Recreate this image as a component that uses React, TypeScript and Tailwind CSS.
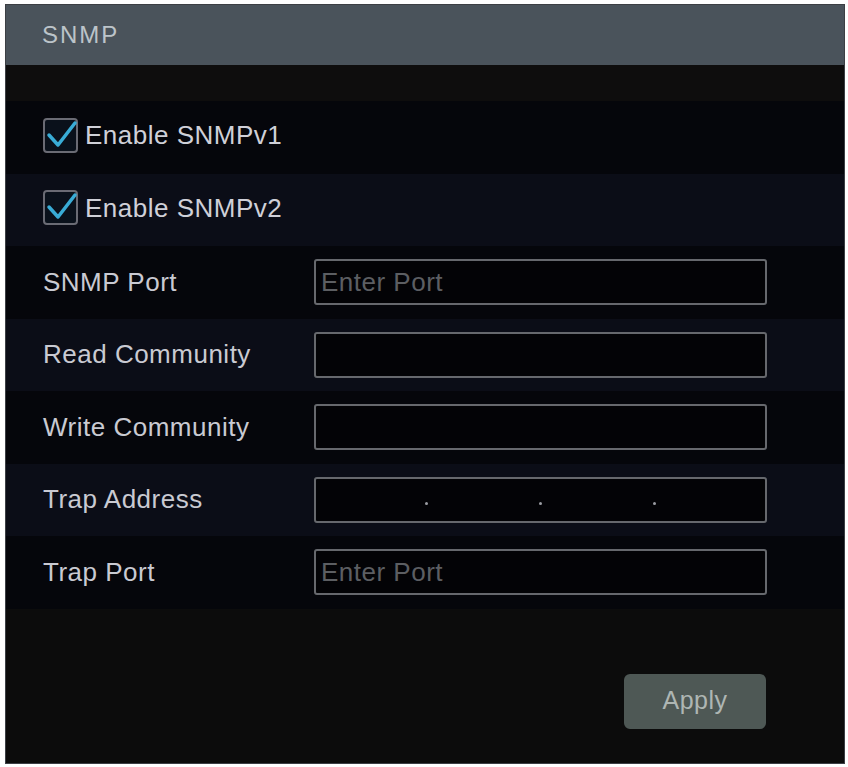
const font = { fontFamily: '"Liberation Sans", Arial, sans-serif' };

const Check = () => (
  <svg width="36" height="36" viewBox="0 0 36 36" className="shrink-0">
    <rect x="1" y="1" width="33" height="33" rx="3" fill="#0a111b" stroke="#6a6b74" strokeWidth="2" />
    <path d="M6 17 L15 27 L32 5" fill="none" stroke="#39acd6" strokeWidth="3.5" strokeLinecap="round" strokeLinejoin="round" />
  </svg>
);

const rows = [
  { kind: "check", label: "Enable SNMPv1" },
  { kind: "check", label: "Enable SNMPv2" },
  { kind: "input", label: "SNMP Port", placeholder: "Enter Port" },
  { kind: "input", label: "Read Community" },
  { kind: "input", label: "Write Community" },
  { kind: "ip", label: "Trap Address" },
  { kind: "input", label: "Trap Port", placeholder: "Enter Port" },
];

const Dot = () => <span className="w-[3px] h-[3px] rounded-full bg-[#9a9ca2]" />;

export default function App() {
  return (
    <div className="w-[848px] h-[767px] bg-white pt-[4px] pl-[5px]" style={font}>
      <div className="w-[840px] h-[760px] flex flex-col border border-[#3c3f44] bg-[#0c0c0c]">
        <div className="h-[60px] shrink-0 bg-[#4a535b] flex items-center pl-[36px] text-[24px] tracking-[2px] text-[#bcc4c9]">
          SNMP
        </div>
        <div className="h-[36px] shrink-0 bg-[#0e0d0d]" />
        {rows.map((row, i) => (
          <div
            key={row.label}
            className={
              "h-[72.5px] shrink-0 flex items-center pl-[37px] " +
              (i % 2 === 0 ? "bg-[#05060b]" : "bg-[#0b0d17]")
            }
          >
            {row.kind === "check" ? (
              <div className="flex items-center gap-[6px] -mt-[3px]">
                <Check />
                <span className="text-[26px] tracking-[0.5px] text-[#cfd0d8]">{row.label}</span>
              </div>
            ) : (
              <>
                <span className="w-[271px] text-[26px] tracking-[0.5px] text-[#c9cad2]">{row.label}</span>
                <div className="w-[453px] h-[46px] rounded-[3px] border-2 border-[#66686d] bg-[#030306] flex items-center px-[5px] text-[26px] tracking-[0.5px] text-[#5c5e62]">
                  {row.kind === "ip" ? (
                    <div className="w-full flex justify-between items-center pl-[104px] pr-[104px] pt-[8px]">
                      <Dot />
                      <Dot />
                      <Dot />
                    </div>
                  ) : (
                    row.placeholder
                  )}
                </div>
              </>
            )}
          </div>
        ))}
        <div className="flex-1 bg-[#0c0c0c] flex justify-end items-start pt-[65px] pr-[78px]">
          <button className="w-[142px] h-[55px] rounded-[6px] bg-[#4e5855] text-[25px] tracking-[0.5px] text-[#aeb6b3]">
            Apply
          </button>
        </div>
      </div>
    </div>
  );
}
